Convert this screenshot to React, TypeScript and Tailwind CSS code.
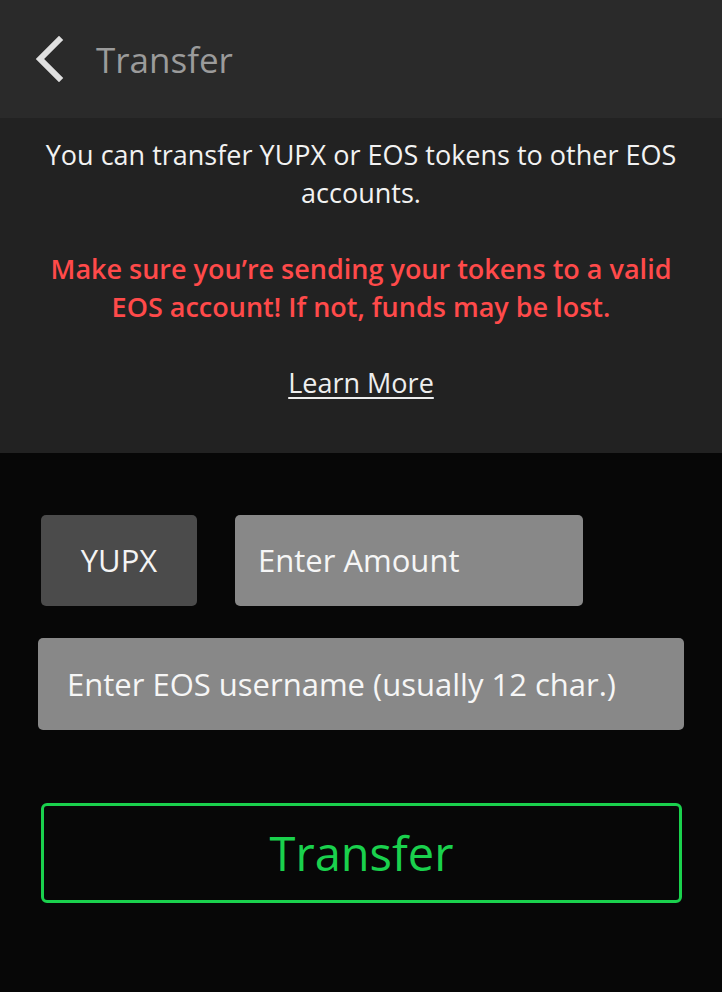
export default function App() {
  return (
    <div className="min-h-[992px] w-[722px] bg-[#070707] font-['Open_Sans',sans-serif]">
      {/* Header */}
      <div className="flex h-[118px] items-center bg-[#2a2a2a]">
        <button className="ml-[34px] flex h-[48px] w-[32px] items-center justify-center">
          <svg width="32" height="46" viewBox="0 0 32 46">
            <path
              d="M25 4 L6 23 L25 42"
              fill="none"
              stroke="#e0e0e0"
              strokeWidth="6"
              strokeLinecap="square"
            />
          </svg>
        </button>
        <span className="ml-[30px] text-[35px] leading-none text-[#9b9b9b]">Transfer</span>
      </div>

      {/* Info */}
      <div className="bg-[#222222] px-[36px] pb-[51px] pt-[18px] text-center text-[27px] leading-[38px]">
        <p className="text-[#f2f2f2]">You can transfer YUPX or EOS tokens to other EOS accounts.</p>
        <p className="mt-[38px] font-semibold text-[#ff4a4a]">
          Make sure you’re sending your tokens to a valid EOS account! If not, funds may be lost.
        </p>
        <a href="#" className="mt-[38px] inline-block text-[#eeeeee] underline underline-offset-[4px]">
          Learn More
        </a>
      </div>

      {/* Form */}
      <div className="pt-[62px]">
        <div className="flex gap-[38px] pl-[41px]">
          <div className="flex h-[91px] w-[156px] items-center justify-center rounded-[5px] bg-[#4b4b4b] text-[31px] text-[#f4f4f4]">
            YUPX
          </div>
          <div className="flex h-[91px] w-[348px] items-center rounded-[5px] bg-[#888888] pl-[23px] text-[31px] text-[#f6f6f6]">
            Enter Amount
          </div>
        </div>
        <div className="ml-[38px] mt-[32px] flex h-[92px] w-[646px] items-center rounded-[5px] bg-[#888888] pl-[29px] text-[31px] text-[#f6f6f6]">
          Enter EOS username (usually 12 char.)
        </div>
        <button className="ml-[41px] mt-[73px] flex h-[100px] w-[641px] items-center justify-center rounded-[6px] border-[3px] border-[#1ad14d] text-[47px] text-[#1ad14d]">
          Transfer
        </button>
      </div>
    </div>
  );
}
